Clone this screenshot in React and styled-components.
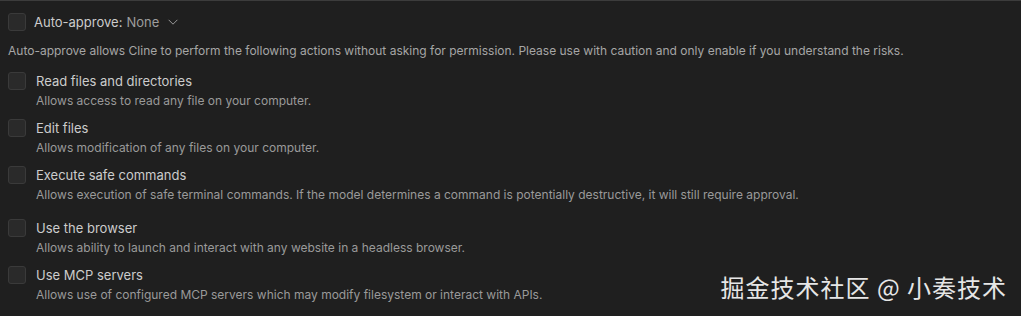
import styled, { createGlobalStyle } from "styled-components";

const GlobalStyle = createGlobalStyle`
  html, body {
    margin: 0;
    padding: 0;
    background: #1f1f1f;
  }
  body {
    font-family: Inter, "Noto Sans", sans-serif;
    -webkit-font-smoothing: antialiased;
  }
`;

const Panel = styled.div`
  position: relative;
  width: 1021px;
  height: 316px;
  box-sizing: border-box;
  border-top: 1px solid #3c3c3c;
  background: #1f1f1f;
  padding: 12px 8px 0;
  overflow: hidden;
`;

const Header = styled.div`
  display: flex;
  align-items: center;
  height: 18px;
  gap: 8px;
`;

const Box = styled.span`
  flex: none;
  width: 16px;
  height: 16px;
  border: 1px solid #3a3a3a;
  border-radius: 3px;
  background: #2a2a2a;
`;

const HeaderLabel = styled.span`
  font-size: 13px;
  color: #cccccc;
  display: flex;
  align-items: center;
  gap: 4px;
`;

const Value = styled.span`
  color: #9d9d9d;
`;

const Chevron = styled.svg`
  margin-left: 3px;
`;

const Intro = styled.p`
  margin: 12px 0 0;
  font-size: 12px;
  color: #a6a6a6;
  line-height: 16px;
`;

const List = styled.div`
  display: flex;
  flex-direction: column;
  margin-top: 13px;
`;

const Row = styled.div`
  display: flex;
  gap: 10px;
  margin-top: ${(p) => p.$gap}px;
`;

const Text = styled.div`
  display: flex;
  flex-direction: column;
  padding-top: 1px;
`;

const Title = styled.span`
  font-size: 13px;
  line-height: 16px;
  color: #cccccc;
`;

const Desc = styled.span`
  font-size: 12px;
  line-height: 16px;
  margin-top: 4px;
  color: #9a9a9a;
`;

const Watermark = styled.div`
  position: absolute;
  right: 14px;
  bottom: 12px;
  font-family: "Noto Sans CJK SC", sans-serif;
  font-size: 24px;
  color: #e6e6e6;
  letter-spacing: 1px;
`;

const actions = [
  { title: "Read files and directories", desc: "Allows access to read any file on your computer.", gap: 0 },
  { title: "Edit files", desc: "Allows modification of any files on your computer.", gap: 11 },
  {
    title: "Execute safe commands",
    desc: "Allows execution of safe terminal commands. If the model determines a command is potentially destructive, it will still require approval.",
    gap: 11,
  },
  { title: "Use the browser", desc: "Allows ability to launch and interact with any website in a headless browser.", gap: 17 },
  { title: "Use MCP servers", desc: "Allows use of configured MCP servers which may modify filesystem or interact with APIs.", gap: 11 },
];

export default function App() {
  return (
    <Panel>
      <GlobalStyle />
      <Header>
        <Box />
        <HeaderLabel>
          Auto-approve: <Value>None</Value>
          <Chevron width="14" height="14" viewBox="0 0 16 16" fill="none">
            <path d="M3 5.5l5 5 5-5" stroke="#9d9d9d" strokeWidth="1.1" />
          </Chevron>
        </HeaderLabel>
      </Header>
      <Intro>
        Auto-approve allows Cline to perform the following actions without asking for permission. Please use with
        caution and only enable if you understand the risks.
      </Intro>
      <List>
        {actions.map((a, i) => (
          <Row key={a.title} $gap={i === 0 ? 0 : a.gap - 1}>
            <Box />
            <Text>
              <Title>{a.title}</Title>
              <Desc>{a.desc}</Desc>
            </Text>
          </Row>
        ))}
      </List>
      <Watermark>掘金技术社区 @ 小奏技术</Watermark>
    </Panel>
  );
}
